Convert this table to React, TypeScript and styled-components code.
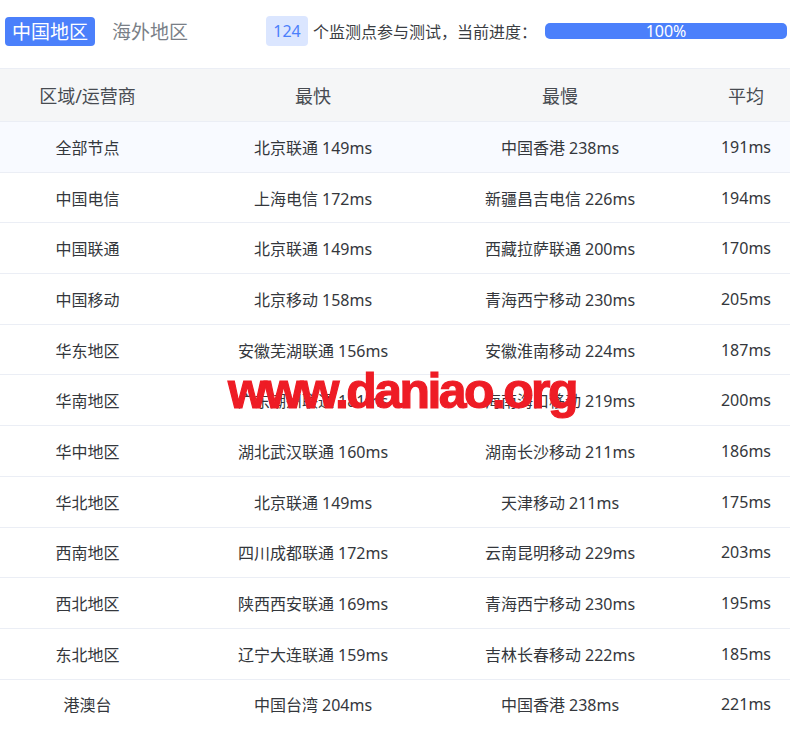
import React from "react";
import styled, { createGlobalStyle } from "styled-components";

const Global = createGlobalStyle`
  html, body { margin: 0; padding: 0; background: #fff; overflow: hidden; }
  body { font-family: "Noto Sans", "Noto Sans CJK SC", sans-serif; }
`;

const Page = styled.div`
  position: relative;
  width: 790px;
  overflow: hidden;
`;

const TopBar = styled.div`
  height: 62px;
  display: flex;
  align-items: center;
  padding: 0 3px 0 5px;
  margin-bottom: 6px;
`;

const Tab = styled.div<{ $active?: boolean }>`
  height: 29px;
  padding: 0 7px;
  border-radius: 4px;
  display: flex;
  align-items: center;
  font-size: 19px;
  color: ${(p) => (p.$active ? "#fff" : "#7a7f87")};
  background: ${(p) => (p.$active ? "#4b80fb" : "transparent")};
  margin-right: ${(p) => (p.$active ? "10px" : "0")};
`;

const Badge = styled.div`
  margin-left: 71px;
  width: 42px;
  height: 30px;
  border-radius: 4px;
  background: #dbe6ff;
  color: #4b80fb;
  font-size: 16px;
  display: flex;
  align-items: center;
  justify-content: center;
`;

const Info = styled.span`
  margin-left: 5px;
  font-size: 16px;
  color: #3a3d42;
  white-space: nowrap;
`;

const Progress = styled.div`
  margin-left: 8px;
  flex: 1;
  height: 16px;
  border-radius: 5px;
  background: #4b80fb;
  color: #fff;
  font-size: 16px;
  line-height: 16px;
  text-align: center;
`;

const Table = styled.div`
  width: 823px;
  border-top: 1px solid #ebeef5;
`;

const Row = styled.div<{ $head?: boolean; $hl?: boolean }>`
  display: grid;
  grid-template-columns: 175px 276px 218px 154px;
  height: ${(p) => (p.$head ? "53px" : "50.7px")};
  box-sizing: border-box;
  border-bottom: 1px solid #ebeef5;
  background: ${(p) => (p.$head ? "#f5f6f7" : p.$hl ? "#f8faff" : "#fff")};
  font-size: ${(p) => (p.$head ? "18px" : "16px")};
  color: ${(p) => (p.$head ? "#474b51" : "#34373c")};
`;

const Cell = styled.div`
  display: flex;
  align-items: center;
  justify-content: center;
  white-space: nowrap;
`;

const Watermark = styled.div`
  position: absolute;
  left: 228px;
  top: 362px;
  font-family: "Liberation Sans", Arial, sans-serif;
  font-weight: 700;
  font-size: 50px;
  letter-spacing: -2.6px;
  color: #ee1c25;
  -webkit-text-stroke: 1.2px #ee1c25;
  white-space: nowrap;
`;

const rows: [string, string, string, string][] = [
  ["全部节点", "北京联通 149ms", "中国香港 238ms", "191ms"],
  ["中国电信", "上海电信 172ms", "新疆昌吉电信 226ms", "194ms"],
  ["中国联通", "北京联通 149ms", "西藏拉萨联通 200ms", "170ms"],
  ["中国移动", "北京移动 158ms", "青海西宁移动 230ms", "205ms"],
  ["华东地区", "安徽芜湖联通 156ms", "安徽淮南移动 224ms", "187ms"],
  ["华南地区", "广东潮州联通 181ms", "海南海口移动 219ms", "200ms"],
  ["华中地区", "湖北武汉联通 160ms", "湖南长沙移动 211ms", "186ms"],
  ["华北地区", "北京联通 149ms", "天津移动 211ms", "175ms"],
  ["西南地区", "四川成都联通 172ms", "云南昆明移动 229ms", "203ms"],
  ["西北地区", "陕西西安联通 169ms", "青海西宁移动 230ms", "195ms"],
  ["东北地区", "辽宁大连联通 159ms", "吉林长春移动 222ms", "185ms"],
  ["港澳台", "中国台湾 204ms", "中国香港 238ms", "221ms"],
];

export default function App() {
  return (
    <Page>
      <Global />
      <TopBar>
        <Tab $active>中国地区</Tab>
        <Tab>海外地区</Tab>
        <Badge>124</Badge>
        <Info>个监测点参与测试，当前进度：</Info>
        <Progress>100%</Progress>
      </TopBar>
      <Table>
        <Row $head>
          <Cell>区域/运营商</Cell>
          <Cell>最快</Cell>
          <Cell>最慢</Cell>
          <Cell>平均</Cell>
        </Row>
        {rows.map((r, i) => (
          <Row key={i} $hl={i === 0}>
            {r.map((c, j) => (
              <Cell key={j}>{c}</Cell>
            ))}
          </Row>
        ))}
      </Table>
      <Watermark>www.daniao.org</Watermark>
    </Page>
  );
}
